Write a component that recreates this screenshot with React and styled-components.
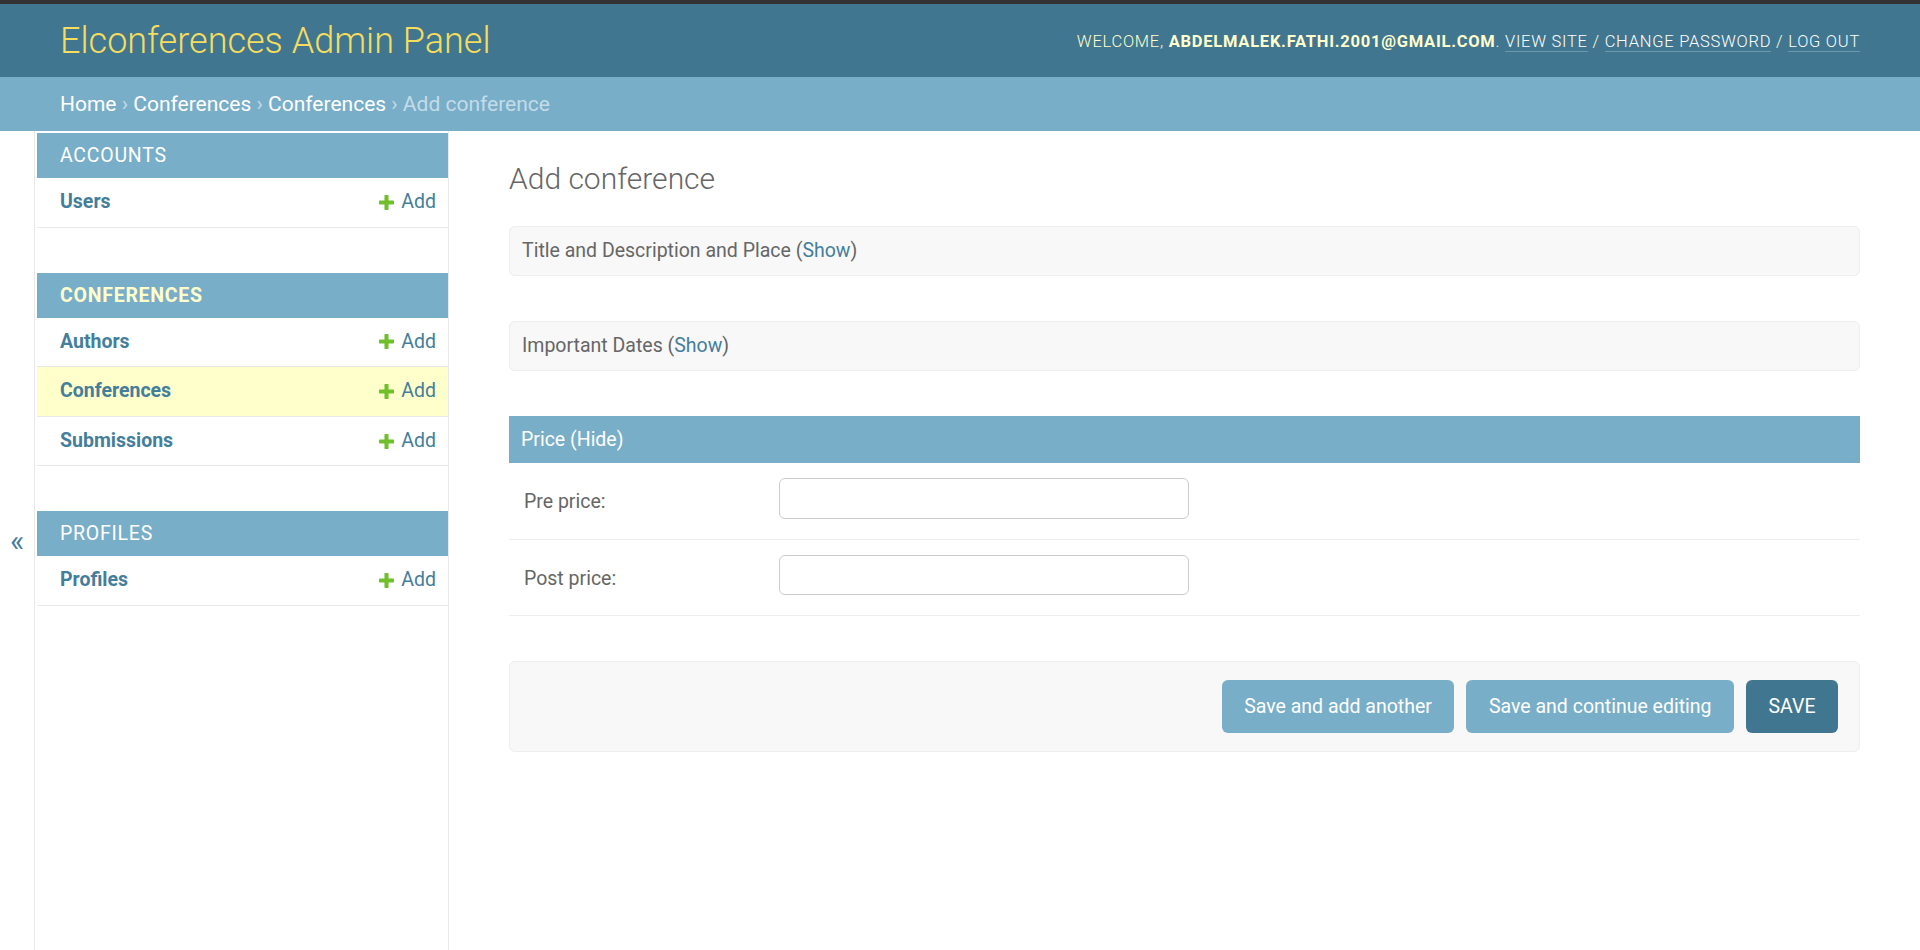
import React from 'react';
import styled, { createGlobalStyle } from 'styled-components';

const GlobalStyle = createGlobalStyle`
  html, body {
    margin: 0;
    padding: 0;
  }
  body {
    font-family: Roboto, 'Liberation Sans', sans-serif;
    color: #333;
    background: #fff;
  }
`;

const Page = styled.div`
  min-height: 100vh;
  display: flex;
  flex-direction: column;
  border-top: 4px solid #333;
  box-sizing: border-box;
`;

const Header = styled.header`
  display: flex;
  justify-content: space-between;
  align-items: center;
  padding: 16px 60px 14px;
  background: #417690;
`;

const Branding = styled.h1`
  margin: 0;
  font-size: 36px;
  font-weight: 300;
  line-height: 43px;
  color: #f5dd5d;
`;

const UserTools = styled.div`
  font-size: 16.5px;
  font-weight: 300;
  letter-spacing: 0.75px;
  text-transform: uppercase;
  color: #ffc;
  text-align: right;
`;

const UserName = styled.strong`
  font-weight: 700;
`;

const ToolLink = styled.a`
  color: #fff;
  text-decoration: none;
  border-bottom: 1px solid rgba(255, 255, 255, 0.25);
`;

const Breadcrumbs = styled.div`
  background: #79aec8;
  padding: 15px 60px;
  font-size: 21px;
  line-height: 24px;
  color: #c4dce8;
`;

const Crumb = styled.a`
  color: #fff;
  text-decoration: none;
`;

const Main = styled.div`
  flex: 1;
  display: flex;
`;

const Toggle = styled.button`
  flex: 0 0 35px;
  display: flex;
  align-items: center;
  justify-content: center;
  padding: 0;
  border: 0;
  border-right: 1px solid #e8e8e8;
  background: #fff;
  color: #447e9b;
  font-family: inherit;
  font-size: 30px;
  cursor: pointer;
`;

const Sidebar = styled.nav`
  flex: 0 0 414px;
  box-sizing: border-box;
  padding: 2px 0 0 2px;
  border-right: 1px solid #e8e8e8;
`;

const Module = styled.div`
  margin-bottom: 45px;
`;

const Caption = styled.div`
  background: #79aec8;
  padding: 12px 12px 12px 23px;
  font-size: 19.5px;
  line-height: 21px;
  letter-spacing: 0.75px;
  text-transform: uppercase;
  color: ${props => props.$current ? '#ffc' : '#fff'};
  font-weight: ${props => props.$current ? 700 : 400};
`;

const ModelRow = styled.div`
  display: flex;
  justify-content: space-between;
  align-items: center;
  padding: 12px 12px 12px 23px;
  font-size: 19.5px;
  line-height: 24.6px;
  border-bottom: 1px solid #e8e8e8;
  background: ${props => props.$current ? '#ffc' : '#fff'};
`;

const ModelName = styled.a`
  font-weight: 700;
  color: #447e9b;
  text-decoration: none;
`;

const AddLink = styled.a`
  display: flex;
  align-items: center;
  gap: 7px;
  color: #447e9b;
  text-decoration: none;
`;

const Content = styled.main`
  flex: 1;
  min-width: 0;
  padding: 30px 60px;
`;

const Title = styled.h1`
  margin: 0 0 29px;
  font-size: 30px;
  font-weight: 300;
  line-height: 36px;
  color: #666;
`;

const Fieldset = styled.fieldset`
  margin: 0 0 45px;
  padding: 0;
  min-width: 0;
  border: ${props => props.$collapsed ? '1px solid #eee' : 'none'};
  border-radius: ${props => props.$collapsed ? '6px' : '0'};
  background: ${props => props.$collapsed ? '#f8f8f8' : 'transparent'};
`;

const FieldsetTitle = styled.h2`
  margin: 0;
  padding: 12px;
  font-size: 19.5px;
  font-weight: 400;
  line-height: ${props => props.$collapsed ? '24px' : '23px'};
  color: ${props => props.$collapsed ? '#666' : '#fff'};
  background: ${props => props.$collapsed ? 'transparent' : '#79aec8'};
`;

const ToggleLink = styled.a`
  color: ${props => props.$light ? '#fff' : '#447e9b'};
  text-decoration: none;
`;

const FormRow = styled.div`
  display: flex;
  padding: 15px 15px 20px;
  border-bottom: 1px solid #eee;
`;

const Label = styled.label`
  flex: 0 0 255px;
  box-sizing: border-box;
  padding: 14px 15px 0 0;
  font-size: 19.5px;
  line-height: 1;
  color: #666;
`;

const Input = styled.input`
  width: 410px;
  height: 40.5px;
  box-sizing: border-box;
  padding: 7px 9px;
  border: 1px solid #ccc;
  border-radius: 6px;
  background: #fff;
  font-family: inherit;
  font-size: 19.5px;
  color: #333;
`;

const SubmitRow = styled.div`
  display: flex;
  justify-content: flex-end;
  gap: 12px;
  padding: 18px 21px;
  background: #f8f8f8;
  border: 1px solid #eee;
  border-radius: 6px;
`;

const Button = styled.button`
  height: 52.5px;
  padding: 0 22.5px;
  border: none;
  border-radius: 6px;
  background: ${props => props.$primary ? '#417690' : '#79aec8'};
  color: #fff;
  font-family: inherit;
  font-size: 19.5px;
  text-transform: ${props => props.$primary ? 'uppercase' : 'none'};
  cursor: pointer;
`;

const PlusIcon = () => (
  <svg width="15" height="15" viewBox="0 0 14 14" aria-hidden="true">
    <rect x="0" y="5.1" width="14" height="3.8" rx="0.7" fill="#70bf2b" />
    <rect x="5.1" y="0" width="3.8" height="14" rx="0.7" fill="#70bf2b" />
  </svg>
);

const apps = [
  { name: 'Accounts', models: ['Users'] },
  { name: 'Conferences', current: true, models: ['Authors', 'Conferences', 'Submissions'], currentModel: 'Conferences' },
  { name: 'Profiles', models: ['Profiles'] },
];

function App() {
  return (
    <>
      <GlobalStyle />
      <Page>
        <Header>
          <Branding>Elconferences Admin Panel</Branding>
          <UserTools>
            Welcome, <UserName>abdelmalek.fathi.2001@gmail.com</UserName>.{' '}
            <ToolLink href="#">View site</ToolLink> /{' '}
            <ToolLink href="#">Change password</ToolLink> /{' '}
            <ToolLink href="#">Log out</ToolLink>
          </UserTools>
        </Header>
        <Breadcrumbs>
          <Crumb href="#">Home</Crumb> › <Crumb href="#">Conferences</Crumb> ›{' '}
          <Crumb href="#">Conferences</Crumb> › Add conference
        </Breadcrumbs>
        <Main>
          <Toggle aria-label="Toggle navigation">«</Toggle>
          <Sidebar>
            {apps.map(app => (
              <Module key={app.name}>
                <Caption $current={app.current}>{app.name}</Caption>
                {app.models.map(model => (
                  <ModelRow key={model} $current={app.currentModel === model}>
                    <ModelName href="#">{model}</ModelName>
                    <AddLink href="#"><PlusIcon />Add</AddLink>
                  </ModelRow>
                ))}
              </Module>
            ))}
          </Sidebar>
          <Content>
            <Title>Add conference</Title>
            <Fieldset $collapsed>
              <FieldsetTitle $collapsed>
                Title and Description and Place (<ToggleLink href="#">Show</ToggleLink>)
              </FieldsetTitle>
            </Fieldset>
            <Fieldset $collapsed>
              <FieldsetTitle $collapsed>
                Important Dates (<ToggleLink href="#">Show</ToggleLink>)
              </FieldsetTitle>
            </Fieldset>
            <Fieldset>
              <FieldsetTitle>
                Price (<ToggleLink $light href="#">Hide</ToggleLink>)
              </FieldsetTitle>
              <FormRow>
                <Label htmlFor="pre_price">Pre price:</Label>
                <Input id="pre_price" type="text" />
              </FormRow>
              <FormRow>
                <Label htmlFor="post_price">Post price:</Label>
                <Input id="post_price" type="text" />
              </FormRow>
            </Fieldset>
            <SubmitRow>
              <Button>Save and add another</Button>
              <Button>Save and continue editing</Button>
              <Button $primary>Save</Button>
            </SubmitRow>
          </Content>
        </Main>
      </Page>
    </>
  );
}

export default App;
